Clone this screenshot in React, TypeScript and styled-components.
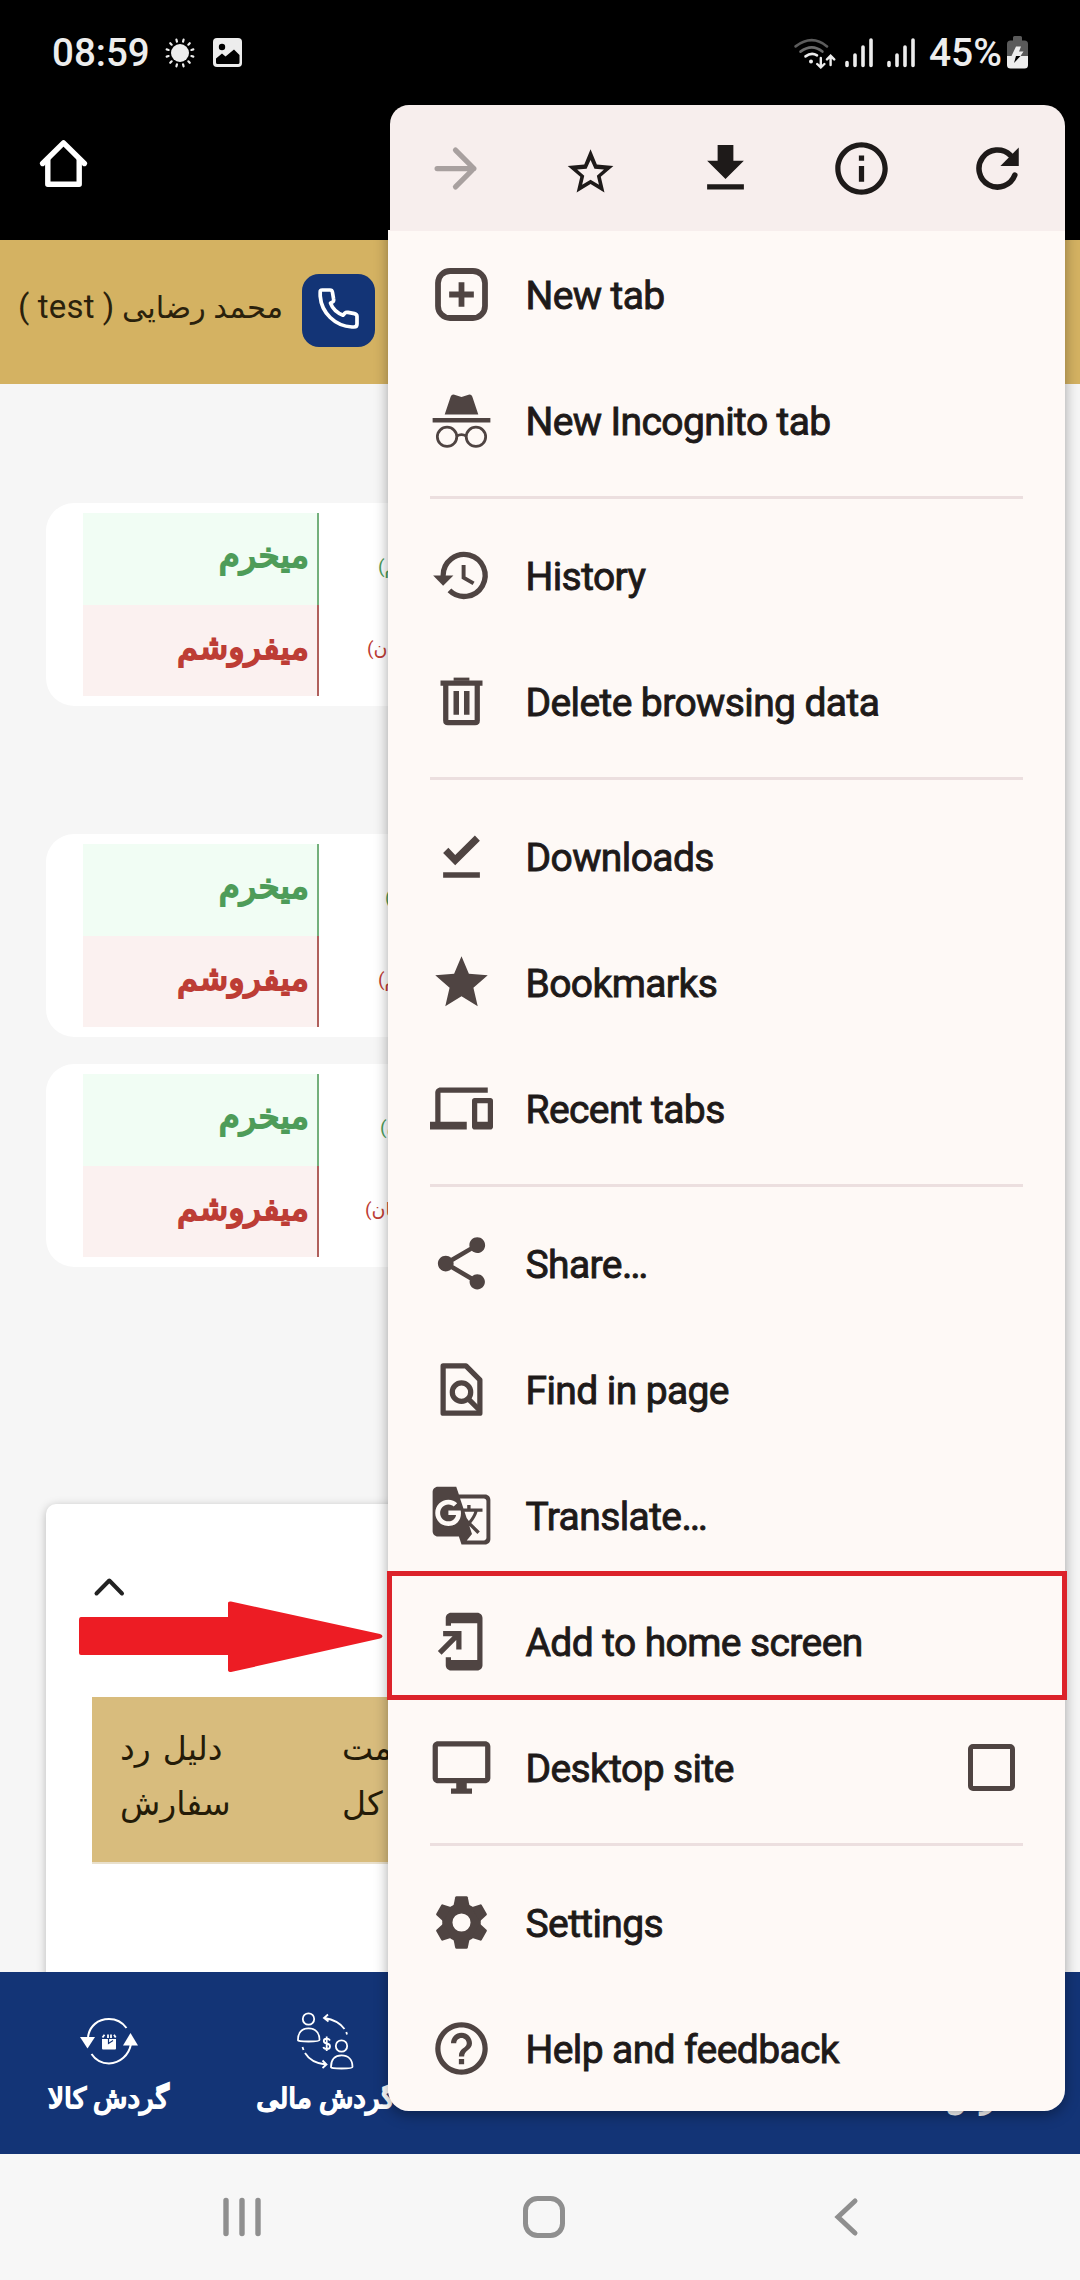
import React from "react";
import styled, { createGlobalStyle } from "styled-components";
import {
  MdAddToHomeScreen,
  MdDevices,
  MdFileDownload,
  MdGTranslate,
  MdHelpOutline,
  MdInfoOutline,
  MdOutlineDesktopWindows,
  MdShare,
  MdStar,
} from "react-icons/md";

const color = {
  gold: "#d4b262",
  tableGold: "#d8bc7d",
  navy: "#133476",
  page: "#f6f6f6",
  menu: "#fef9f6",
  menuTop: "#f7eeed",
  divider: "#ecdfdf",
  icon: "#4f4442",
  text: "#1e1a19",
  green: "#4e9c59",
  red: "#bd3d35",
  alert: "#ed1c24",
  nav: "#8f8f8f",
};

const GlobalStyle = createGlobalStyle`
  *, *::before, *::after { box-sizing: border-box; }
  body { margin: 0; background: ${color.page}; font-family: Roboto, "DejaVu Sans", sans-serif; }
  svg { display: block; flex: none; }
`;

const Screen = styled.div`
  position: relative;
  width: 1080px;
  height: 2280px;
  overflow: hidden;
  display: flex;
  flex-direction: column;
  background: ${color.page};
`;

const StatusBar = styled.header`
  flex: none;
  height: 105px;
  padding: 0 52px;
  display: flex;
  align-items: center;
  justify-content: space-between;
  background: #000;
  color: #ededed;
`;

const StatusGroup = styled.div<{ $gap: number }>`
  display: flex;
  align-items: center;
  gap: ${(p) => p.$gap}px;
`;

const StatusText = styled.span<{ $size: number }>`
  font-size: ${(p) => p.$size}px;
  line-height: 48px;
  font-weight: 500;
  padding-top: 1px;
`;

const BrowserBar = styled.div`
  flex: none;
  height: 135px;
  padding: 32px 37px;
  background: #000;
`;

const AccountBar = styled.div`
  flex: none;
  height: 144px;
  padding: 34px 0 0 8px;
  display: flex;
  align-items: flex-start;
  background: ${color.gold};
`;

const UserName = styled.div`
  width: 275px;
  margin-right: 19px;
  font-size: 30.5px;
  line-height: 66px;
  color: #2a210c;
  white-space: nowrap;
  direction: rtl;
  text-align: right;
`;

const Login = styled.span`
  font-size: 33px;
  letter-spacing: 0.2px;
`;

const CallButton = styled.button`
  width: 73px;
  height: 73px;
  padding: 0 0 4px 0;
  border: 0;
  border-radius: 17px;
  display: grid;
  place-items: center;
  background: ${color.navy};
  color: #fff;
`;

const Content = styled.main`
  flex: 1;
  min-height: 0;
  overflow: hidden;
  padding: 119px 46px 0;
  display: flex;
  flex-direction: column;
`;

const Card = styled.section<{ $after: number }>`
  flex: none;
  height: 203px;
  margin-bottom: ${(p) => p.$after}px;
  padding: 10px 37px;
  border-radius: 28px;
  background: #fff;
  display: flex;
  flex-direction: column;
`;

const OrderRow = styled.div`
  flex: 1 1 0;
  min-height: 0;
  display: flex;
`;

const OrderSide = styled.div<{ $buy?: boolean }>`
  width: 236px;
  padding-right: 8px;
  border-right: 2px solid ${(p) => (p.$buy ? "#74b07c" : "#b0605c")};
  background: ${(p) => (p.$buy ? "#f1fdf4" : "#fbf1f0")};
  color: ${(p) => (p.$buy ? color.green : color.red)};
  font-size: 34px;
  -webkit-text-stroke: 2px currentColor;
  line-height: 85px;
  direction: rtl;
  text-align: start;
`;

const Unit = styled.div<{ $buy?: boolean; $indent: number }>`
  padding-left: ${(p) => p.$indent}px;
  padding-top: ${(p) => (p.$buy ? 13 : 3)}px;
  color: ${(p) => (p.$buy ? color.green : color.red)};
  font-size: 19px;
  line-height: 82px;
  white-space: nowrap;
  direction: rtl;
`;

const Spacer = styled.div`
  flex: none;
  height: 201px;
`;

const Panel = styled.section`
  flex: none;
  width: 988px;
  height: 600px;
  margin-top: 36px;
  padding: 72px 46px 0;
  border-radius: 10px;
  background: #fff;
  box-shadow: 0 2px 10px rgba(0, 0, 0, 0.25);
`;

const TableHead = styled.div`
  margin-top: 99px;
  height: 167px;
  padding: 24px 28px 0;
  display: flex;
  border-bottom: 2px solid #e9e0cc;
  background: ${color.tableGold};
`;

const HeadCell = styled.div<{ $width: number }>`
  flex: none;
  width: ${(p) => p.$width}px;
  font-size: 33px;
  line-height: 55px;
  word-spacing: 4px;
  color: #241b08;
  direction: rtl;
  text-align: left;
`;

const BottomTabs = styled.nav`
  flex: none;
  height: 182px;
  display: grid;
  grid-template-columns: repeat(5, 217px);
  background: ${color.navy};
  color: #fff;
`;

const Tab = styled.a<{ $inset?: number }>`
  padding-top: 38px;
  padding-left: ${(p) => p.$inset ?? 0}px;
  display: flex;
  flex-direction: column;
  align-items: center;
  gap: 6px;
  font-size: 28.2px;
  -webkit-text-stroke: 1.8px currentColor;
  line-height: 42px;
  white-space: nowrap;
  direction: rtl;
`;

const TabIconSlot = styled.span`
  height: 62px;
  display: flex;
  align-items: center;
`;

const SystemNav = styled.nav`
  flex: none;
  height: 126px;
  padding: 0 221px 0 222px;
  display: flex;
  align-items: center;
  justify-content: space-between;
  background: #f7f7f7;
  color: ${color.nav};
`;

const Menu = styled.aside`
  position: absolute;
  top: 105px;
  left: 388px;
  width: 677px;
  height: 2006px;
  border-radius: 21px;
  box-shadow: 0 4px 14px rgba(0, 0, 0, 0.35);
  background: linear-gradient(transparent 125px, ${color.menu} 125px);
`;

const MenuActions = styled.div`
  height: 126px;
  margin-left: 2px;
  display: grid;
  grid-template-columns: 131px repeat(4, 1fr);
  align-items: center;
  justify-items: center;
  border-radius: 19px 21px 0 0;
  background: ${color.menuTop};
  color: ${color.text};
`;

const MenuRow = styled.div`
  position: relative;
  height: 126px;
  padding: 0 50px 0 42px;
  display: flex;
  align-items: center;
  color: ${color.icon};
`;

const MenuLabel = styled.span`
  flex: 1;
  margin-left: 32.5px;
  padding-top: 3px;
  font-size: 39px;
  line-height: 46px;
  letter-spacing: -0.6px;
  color: ${color.text};
  -webkit-text-stroke: 0.9px ${color.text};
`;

const MenuDivider = styled.hr`
  height: 3px;
  margin: 13px 42px;
  border: 0;
  background: ${color.divider};
`;

const Checkbox = styled.span`
  width: 47px;
  height: 47px;
  border: 5px solid ${color.icon};
  border-radius: 5px;
`;

const Highlight = styled.span`
  position: absolute;
  top: -7px;
  left: -1px;
  width: 680px;
  height: 129px;
  border: 5px solid #dc232a;
`;

const Pointer = styled.div`
  position: absolute;
  top: 1600px;
  left: 79px;
`;

const SunIcon = () => (
  <svg width="30" height="30" viewBox="-15 -15 30 30">
    <circle r="9" fill="currentColor" />
    {Array.from({ length: 12 }, (_, i) => (
      <path key={i} d="M0-11.8V-13.8" transform={`rotate(${15 + i * 30})`} stroke="currentColor" strokeWidth="2.2" strokeLinecap="round" />
    ))}
  </svg>
);

const PictureIcon = () => (
  <svg width="29" height="29" viewBox="0 0 29 29">
    <rect width="29" height="29" rx="4" fill="currentColor" />
    <circle cx="9" cy="9" r="3.2" fill="#000" />
    <path d="M3 20.5L9 15.5L12.5 18.5L21 11.5L26.5 17V24.5Q26.5 26 25 26H4.5Q3 26 3 24.5Z" fill="#000" />
  </svg>
);

const WifiIcon = () => (
  <svg width="42" height="32" viewBox="0 0 42 32" fill="none" strokeLinecap="round" strokeWidth="2.6">
    <path d="M1.6 9.4Q18 -3 33 9.4" stroke="#5c5c5c" />
    <path d="M6.5 14.6Q18 6 28.4 14.6" stroke="#6b6b6b" />
    <path d="M11.5 19.4Q17.5 15 23 18.4" stroke="currentColor" />
    <circle cx="17" cy="24.6" r="2" fill="currentColor" />
    <path d="M26.8 21V30M23.2 27L26.8 30.4L30.4 27M36.6 28V19.4M33 22.4L36.6 18.8L40.2 22.4" stroke="currentColor" strokeWidth="2.4" />
  </svg>
);

const SignalIcon = () => (
  <svg width="28" height="30" viewBox="0 0 28 30" stroke="currentColor" strokeWidth="3.6" strokeLinecap="round">
    <path d="M2 24.5V27.5M10 17V27.5M18 9V27.5M26 2V27.5" />
  </svg>
);

const BatteryIcon = () => (
  <svg width="21" height="33" viewBox="0 0 21 33">
    <path d="M6 1.5Q6 0 7.5 0H13.5Q15 0 15 1.5V4.5H17.5Q21 4.5 21 8V20H0V8Q0 4.5 3.5 4.5H6Z" fill="#5a5a5a" />
    <path d="M0 20H21V29Q21 32.5 17.5 32.5H3.5Q0 32.5 0 29Z" fill="#ededed" />
    <path d="M9 10.5H14L12 15.5H16.5L13.5 20H4.5Z" fill="#ededed" />
    <path d="M9 20H13.5L7 27Z" fill="#000" />
  </svg>
);

const HomeIcon = () => (
  <svg width="54" height="54" viewBox="0 0 54 54" fill="none" stroke="#fff" strokeWidth="5.4" strokeLinejoin="round" strokeLinecap="round">
    <path d="M5.6 26.5L26.5 5.8L47.4 26.5" />
    <path d="M10.8 23V47.2H42.2V23" />
  </svg>
);

const PhoneIcon = () => (
  <svg width="41" height="41" viewBox="0 0 41 41" fill="none" stroke="currentColor" strokeWidth="3.7" strokeLinejoin="round">
    <path d="M2.2 4.2Q2 2 4.2 2H12Q14 2 14.4 4L15.6 11Q16 13 14.5 14L12.5 15.2C14.5 20.5 19 25 25 27.2L27 25Q28 24 30 24.4L36.5 25.6Q39 26.2 39 28.5V36Q39 39 36 39H34C17 38 3.5 25 2.2 8Z" />
  </svg>
);

const ForwardIcon = () => (
  <svg width="63" height="63" viewBox="0 0 24 24" fill="none" stroke="#a8a09f" strokeWidth="2" strokeLinecap="round" strokeLinejoin="round">
    <path d="M5 12H19M12 5L19 12L12 19" />
  </svg>
);

const StarOutlineIcon = () => (
  <svg width="63" height="63" viewBox="-0.4 0 24 24" fill="currentColor" fillRule="evenodd">
    <path d="M12 4.7L14.4 10.5L20.7 11L15.9 15.1L17.3 21.1L12 17.9L6.7 21.1L8.1 15.1L3.3 11L9.6 10.5ZM12 8.8L10.5 12.1L6.9 12.4L9.6 14.8L8.8 18.2L12 16.3L15.2 18.2L14.4 14.8L17.1 12.4L13.5 12.1Z" />
  </svg>
);

const ReloadIcon = () => (
  <svg width="63" height="63" viewBox="0 0 24 24" fill="none" stroke="currentColor" strokeWidth="2.1" strokeLinecap="round">
    <path d="M18.6 14.5A7.05 7.05 0 1 1 16.9 6.95" />
    <path d="M20.1 4V11H13.1Z" fill="currentColor" stroke="none" />
  </svg>
);

const NewTabIcon = () => (
  <svg width="63" height="63" viewBox="0 0 24 24" fill="none" stroke="currentColor" strokeWidth="2.2">
    <rect x="3.05" y="3.05" width="17.9" height="17.9" rx="4.6" />
    <path d="M12 7.3V16.7M7.3 12H16.7" />
  </svg>
);

const IncognitoIcon = () => (
  <svg width="63" height="63" viewBox="0 0 24 24" fill="none" stroke="currentColor">
    <path
      d="M5.6 9.7L7.9 2.9Q8.3 1.9 9.3 2.2L12 3L14.7 2.2Q15.7 1.9 16.1 2.9L18.4 9.7Z"
      fill="currentColor"
      stroke="none"
    />
    <path d="M1 11.9H23" strokeWidth="1.7" />
    <circle cx="6.5" cy="18.2" r="3.7" strokeWidth="1.05" />
    <circle cx="17.5" cy="18.2" r="3.7" strokeWidth="1.05" />
    <path d="M10.2 17.9Q12 16.9 13.8 17.9" strokeWidth="1.05" />
  </svg>
);

const HistoryIcon = () => (
  <svg width="63" height="63" viewBox="0 0 24 24" fill="none" stroke="currentColor" strokeWidth="2">
    <path d="M5 12.5V12A8 8 0 1 1 7.4 17.7" />
    <path d="M1.2 12H8.9L5 15.9Z" fill="currentColor" stroke="none" />
    <path d="M12.8 8V12.8L16.6 15" strokeWidth="1.5" />
  </svg>
);

const TrashIcon = () => (
  <svg width="63" height="63" viewBox="0 0 24 24" fill="none" stroke="currentColor" strokeWidth="2">
    <path d="M4 5H20" />
    <path d="M9 3.5H15" strokeWidth="1.2" />
    <path d="M6 5V19.2Q6 20 6.8 20H17.2Q18 20 18 19.2V5" />
    <path d="M10 8V17M14 8V17" strokeWidth="2.1" />
  </svg>
);

const DownloadDoneIcon = () => (
  <svg width="63" height="63" viewBox="0 0 24 24" fill="currentColor">
    <path d="M5 18H19V20.1H5Z" />
    <path d="M9.6 15.3L5 10.7L7 8.7L9.6 11.4L17.1 4L19 6Z" />
  </svg>
);

const FindIcon = () => (
  <svg width="63" height="63" viewBox="0 0 24 24" fill="none" stroke="currentColor" strokeWidth="2" strokeLinejoin="round">
    <path d="M5 3H13.7L19 8.3V21H5Z" />
    <circle cx="12" cy="13" r="3.5" />
    <path d="M14.5 15.5L19 20" />
  </svg>
);

const GearIcon = () => (
  <svg width="63" height="63" viewBox="-12 -12 24 24" fill="currentColor">
    <circle r="5.4" fill="none" stroke="currentColor" strokeWidth="3.9" />
    {Array.from({ length: 6 }, (_, i) => (
      <path key={i} d="M-3.1 -6.2L-2.4 -9.6Q-2.3 -10 -1.9 -10H1.9Q2.3 -10 2.4 -9.6L3.1 -6.2Z" transform={`rotate(${i * 60})`} />
    ))}
  </svg>
);

const GoodsCycleIcon = () => (
  <svg width="58" height="48" viewBox="0 0 58 48" fill="none" stroke="currentColor" strokeWidth="2">
    <path d="M8 20C9.5 9 18 2 29 2C36.5 2 42.5 5.5 46.5 11" />
    <path d="M11.5 37C15.5 43 21.5 46.4 29 46.4C40 46.4 49 38 51 27" />
    <path d="M0 20H15L7.5 31.5Z" fill="currentColor" stroke="none" />
    <path d="M43 28.5H58L50.5 16Z" fill="currentColor" stroke="none" />
    <path d="M22 22H36V31.5Q36 32.5 35 32.5H23Q22 32.5 22 31.5Z" fill="currentColor" stroke="none" />
    <path d="M22.5 20.5L24.5 17.8M28 17.5V21M31 17.5V21M34 17.8L35.7 20.5" strokeWidth="1.8" />
    <path d="M28.5 22V26.5L33 23.5" stroke={color.navy} strokeWidth="1.2" />
  </svg>
);

const Person = ({ x, y }: { x: number; y: number }) => (
  <g transform={`translate(${x} ${y})`}>
    <circle cx="11.5" cy="7" r="5.7" />
    <path d="M1 28C1 20.5 5 16.4 11.5 16.4S22.5 20.5 22.5 28Q22.5 29.5 11.5 29.5T1 28Z" />
  </g>
);

const MoneyCycleIcon = () => (
  <svg width="57" height="58" viewBox="0 0 57 58" fill="none" stroke="currentColor" strokeWidth="1.8">
    <Person x={0} y={0} />
    <Person x={33} y={27} />
    <path d="M27.5 6C37 7.5 43.5 11.5 47.5 17M49.3 20L50 22.5M31 2.5L27 6L31.5 9.5" />
    <path d="M5.5 35L6.5 38M8 41C12 47.5 19 51.5 28.5 52.5M25.5 48.5L29.5 52.5L25.5 56" />
    <path d="M33 28.5Q32 26.6 29.5 26.6Q26.8 26.6 26.8 29Q26.8 31 29.7 31.5Q33 32 33 34.4Q33 37 29.8 37Q27 37 26.3 35M29.7 24.5V39" />
  </svg>
);

const RecentsIcon = () => (
  <svg width="40" height="42" viewBox="0 0 40 42" stroke="currentColor" strokeWidth="5.4" strokeLinecap="round">
    <path d="M4 4.5V37.5M20 4.5V37.5M36 4.5V37.5" />
  </svg>
);

const HomeKeyIcon = () => (
  <svg width="42" height="42" viewBox="0 0 42 42" fill="none" stroke="currentColor" strokeWidth="5">
    <rect x="2.5" y="2.5" width="37" height="37" rx="12" />
  </svg>
);

const BackIcon = () => (
  <svg width="33" height="42" viewBox="-8 0 33 42" fill="none" stroke="currentColor" strokeWidth="5" strokeLinecap="round">
    <path d="M21 5L4 21L21 37" />
  </svg>
);

type Entry = { label: string; icon: React.ReactNode; marked?: boolean; checkbox?: boolean };

const groups: Entry[][] = [
  [
    { label: "New tab", icon: <NewTabIcon /> },
    { label: "New Incognito tab", icon: <IncognitoIcon /> },
  ],
  [
    { label: "History", icon: <HistoryIcon /> },
    { label: "Delete browsing data", icon: <TrashIcon /> },
  ],
  [
    { label: "Downloads", icon: <DownloadDoneIcon /> },
    { label: "Bookmarks", icon: <MdStar size={63} /> },
    { label: "Recent tabs", icon: <MdDevices size={63} /> },
  ],
  [
    { label: "Share…", icon: <MdShare size={63} /> },
    { label: "Find in page", icon: <FindIcon /> },
    { label: "Translate…", icon: <MdGTranslate size={63} /> },
    { label: "Add to home screen", icon: <MdAddToHomeScreen size={63} />, marked: true },
    { label: "Desktop site", icon: <MdOutlineDesktopWindows size={63} />, checkbox: true },
  ],
  [
    { label: "Settings", icon: <GearIcon /> },
    { label: "Help and feedback", icon: <MdHelpOutline size={63} /> },
  ],
];

const cards = [
  { buy: "(گرم)", buyIndent: 59, sell: "(تومان)", sellIndent: 48, after: 128 },
  { buy: "(گرم)", buyIndent: 66, sell: "(گرم)", sellIndent: 59, after: 27 },
  { buy: "(تومان)", buyIndent: 61, sell: "(تومان)", sellIndent: 46, after: 0 },
];

export default function App() {
  return (
    <>
      <GlobalStyle />
      <Screen>
        <StatusBar>
          <StatusGroup $gap={15}>
            <StatusText $size={38.5}>08:59</StatusText>
            <StatusGroup $gap={18}>
              <SunIcon />
              <PictureIcon />
            </StatusGroup>
          </StatusGroup>
          <StatusGroup $gap={5}>
            <StatusGroup $gap={14}>
              <StatusGroup $gap={9}>
                <WifiIcon />
                <SignalIcon />
              </StatusGroup>
              <SignalIcon />
              <StatusText $size={39}>45%</StatusText>
            </StatusGroup>
            <BatteryIcon />
          </StatusGroup>
        </StatusBar>
        <BrowserBar>
          <HomeIcon />
        </BrowserBar>
        <AccountBar>
          <UserName>
            محمد رضایی <Login>( test )</Login>
          </UserName>
          <CallButton>
            <PhoneIcon />
          </CallButton>
        </AccountBar>
        <Content>
          {cards.map((card, i) => (
            <Card key={i} $after={card.after}>
              <OrderRow>
                <OrderSide $buy>میخرم</OrderSide>
                <Unit $buy $indent={card.buyIndent}>{card.buy}</Unit>
              </OrderRow>
              <OrderRow>
                <OrderSide>میفروشم</OrderSide>
                <Unit $indent={card.sellIndent}>{card.sell}</Unit>
              </OrderRow>
            </Card>
          ))}
          <Spacer />
          <Panel>
            <svg width="34" height="22" viewBox="0 0 34 22" fill="none" stroke="#222" strokeWidth="4" strokeLinecap="round" strokeLinejoin="round">
              <path d="M4.5 17.5L17.3 4.5L30 17.5" />
            </svg>
            <TableHead>
              <HeadCell $width={222}>
                دلیل رد
                <br />
                سفارش
              </HeadCell>
              <HeadCell $width={222}>
                قیمت
                <br />
                کل
              </HeadCell>
            </TableHead>
          </Panel>
        </Content>
        <BottomTabs>
          <Tab>
            <TabIconSlot>
              <GoodsCycleIcon />
            </TabIconSlot>
            گردش کالا
          </Tab>
          <Tab>
            <TabIconSlot>
              <MoneyCycleIcon />
            </TabIconSlot>
            گردش مالی
          </Tab>
          <Tab />
          <Tab />
          <Tab $inset={34}>
            <TabIconSlot />
            سفارش
          </Tab>
        </BottomTabs>
        <SystemNav>
          <RecentsIcon />
          <HomeKeyIcon />
          <BackIcon />
        </SystemNav>

        <Pointer>
          <svg width="304" height="74" viewBox="0 0 304 74">
            <path d="M2 17H149V3Q149 1 152 1.5L301 34Q306 36 301 38.5L152 72Q149 72 149 70V55H2Q0 55 0 53V20Q0 17 2 17Z" fill={color.alert} />
          </svg>
        </Pointer>

        <Menu>
          <MenuActions>
            <ForwardIcon />
            <StarOutlineIcon />
            <MdFileDownload size={63} />
            <MdInfoOutline size={63} />
            <ReloadIcon />
          </MenuActions>
          {groups.map((entries, g) => (
            <React.Fragment key={g}>
              {g > 0 && <MenuDivider />}
              {entries.map((entry) => (
                <MenuRow key={entry.label}>
                  {entry.icon}
                  <MenuLabel>{entry.label}</MenuLabel>
                  {entry.checkbox && <Checkbox />}
                  {entry.marked && <Highlight />}
                </MenuRow>
              ))}
            </React.Fragment>
          ))}
        </Menu>
      </Screen>
    </>
  );
}
